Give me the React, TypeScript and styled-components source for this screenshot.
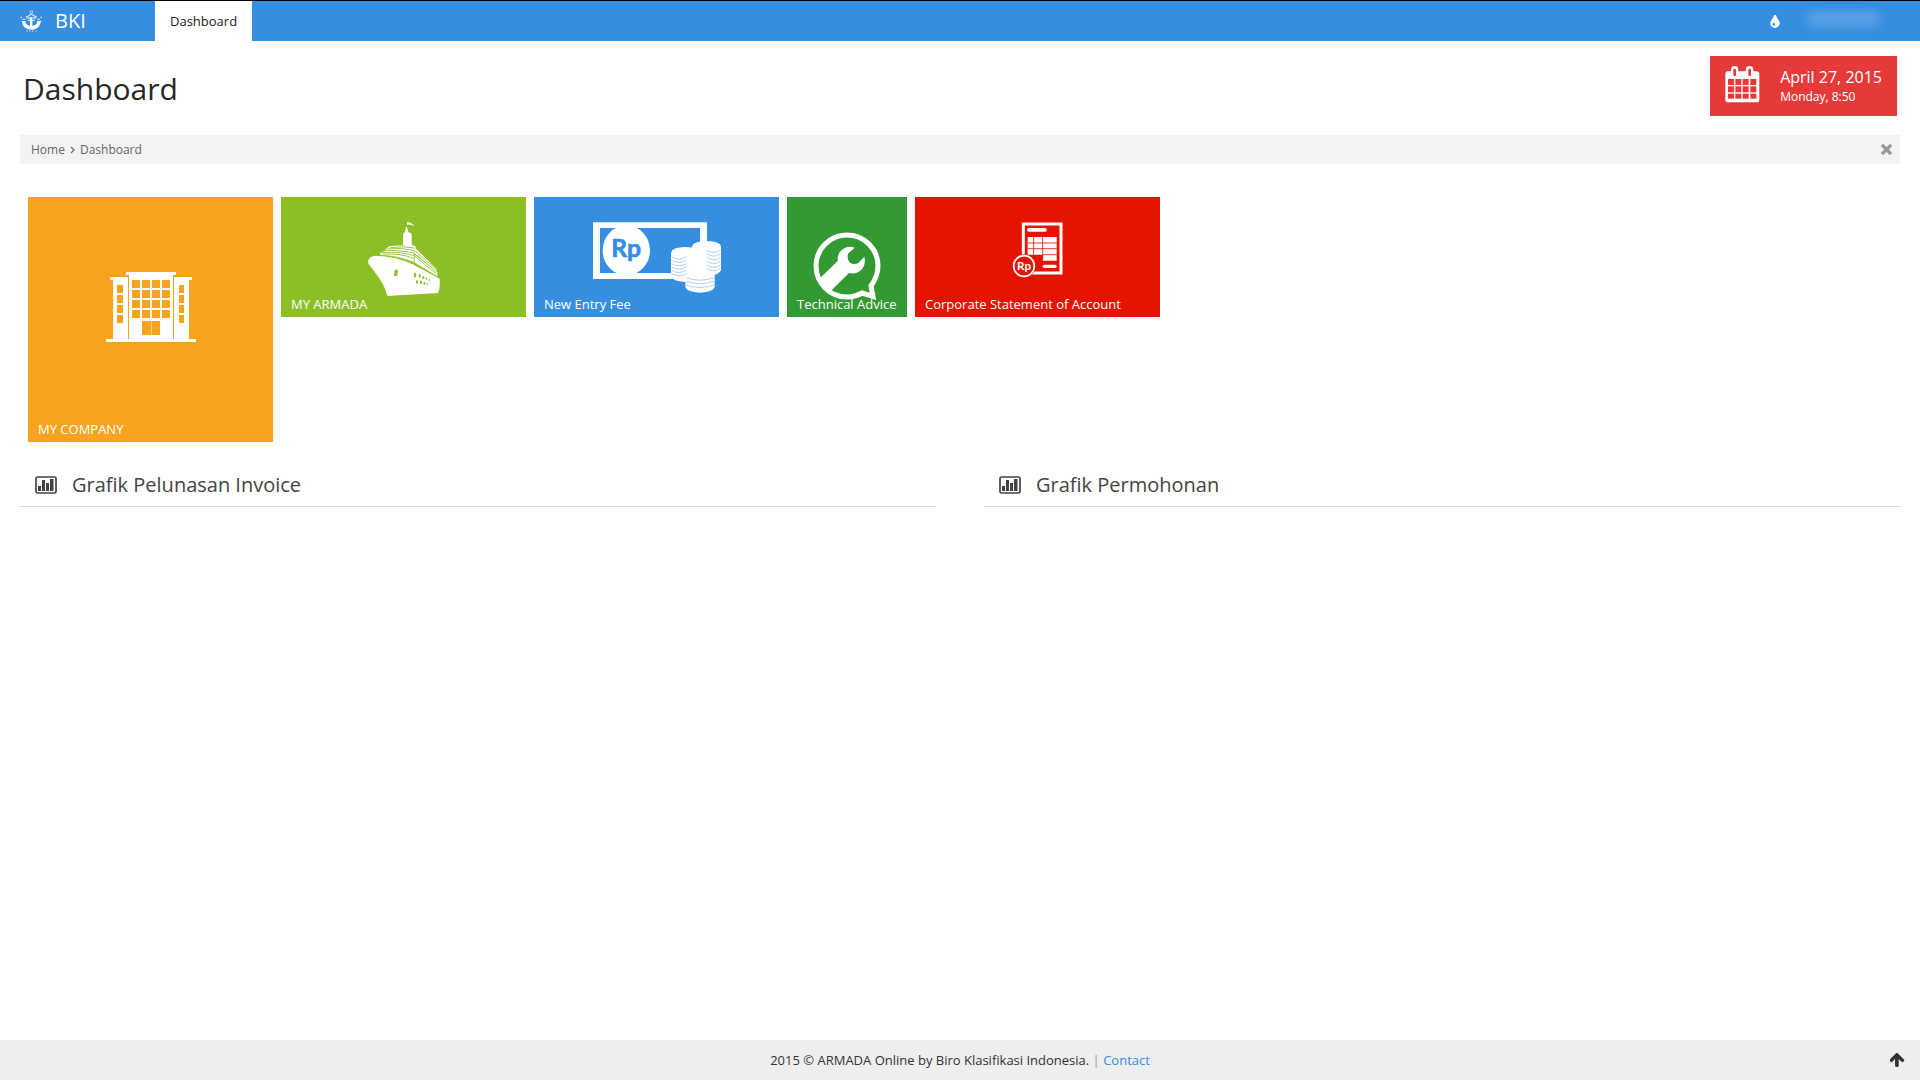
import React from "react";
import styled, { createGlobalStyle } from "styled-components";

const GlobalStyle = createGlobalStyle`
  *, *::before, *::after { box-sizing: border-box; }
  body {
    margin: 0;
    background: #fff;
    color: #333;
    font-family: "Open Sans", "Noto Sans", sans-serif;
    font-size: 13px;
    line-height: 20px;
  }
  a { text-decoration: none; color: inherit; }
  button { font: inherit; border: 0; padding: 0; background: none; cursor: pointer; }
  svg { display: block; flex: none; }
`;

const Page = styled.div`
  min-height: 100vh;
  display: flex;
  flex-direction: column;
`;

const Navbar = styled.header`
  display: flex;
  height: 41px;
  border-top: 1px solid #000;
  background: #368ee0;
  color: #fff;
`;

const Brand = styled.a`
  display: flex;
  align-items: center;
  gap: 13px;
  width: 155px;
  padding-left: 20px;
  font-size: 20px;
`;

const NavLink = styled.a`
  display: flex;
  align-items: center;
  padding: 0 15px;
  background: #fff;
  color: #222;
`;

const UserArea = styled.div`
  display: flex;
  align-items: center;
  gap: 26px;
  margin-left: auto;
  padding-right: 40px;
`;

const IconButton = styled.button`
  display: flex;
  color: inherit;
`;

const UserBlur = styled.span`
  width: 74px;
  height: 16px;
  margin-bottom: 4px;
  border-radius: 8px;
  background: #59a1e6;
  filter: blur(5px);
`;

const Main = styled.main`
  flex: 1;
  padding: 0 20px;
`;

const PageHeader = styled.div`
  display: flex;
  justify-content: space-between;
  align-items: flex-start;
  padding: 15px 3px 19px;
`;

const Title = styled.h1`
  margin: 13px 0 0;
  font-size: 30px;
  line-height: 40px;
  font-weight: 400;
  color: #262626;
`;

const DateCard = styled.div`
  display: flex;
  gap: 20px;
  height: 60px;
  padding: 10px 15px;
  background: #e63a3a;
  color: #fff;
`;

const DateText = styled.div`
  display: flex;
  flex-direction: column;
`;

const DateMain = styled.span`
  font-size: 16px;
  line-height: 22px;
`;

const DateSub = styled.span`
  font-size: 12px;
  line-height: 18px;
`;

const Breadcrumbs = styled.nav`
  display: flex;
  align-items: center;
  gap: 5px;
  height: 29px;
  padding: 0 8px 0 11px;
  background: #f3f3f3;
  color: #666;
  font-size: 12px;
`;

const CloseButton = styled(IconButton)`
  margin-left: auto;
  color: #999;
`;

const Tiles = styled.div`
  display: flex;
  flex-wrap: wrap;
  align-items: flex-start;
  gap: 8px;
  padding: 33px 8px 0;
`;

const Tile = styled.a<{ $color: string; $size: "small" | "wide" | "large" }>`
  display: grid;
  width: ${({ $size }) => ($size === "small" ? 120 : 245)}px;
  height: ${({ $size }) => ($size === "large" ? 245 : 120)}px;
  background: ${({ $color }) => $color};
  color: #fff;
`;

const TileIcon = styled.span<{ $top: number }>`
  grid-area: 1 / 1;
  justify-self: center;
  padding-top: ${({ $top }) => $top}px;
`;

const TileLabel = styled.span`
  grid-area: 1 / 1;
  align-self: end;
  padding: 0 10px 3px;
  white-space: nowrap;
`;

const Charts = styled.div`
  display: grid;
  grid-template-columns: 1fr 1fr;
  gap: 48px;
  padding-top: 22px;
`;

const ChartTitle = styled.h2`
  display: flex;
  align-items: center;
  gap: 15px;
  height: 43px;
  margin: 0;
  padding-left: 15px;
  border-bottom: 1px solid #d9d9d9;
  color: #444;
  font-size: 20px;
  font-weight: 400;
`;

const Footer = styled.footer`
  display: grid;
  grid-template-columns: 1fr auto 1fr;
  align-items: center;
  height: 40px;
  padding: 0 15px;
  background: #eee;
`;

const FooterText = styled.div`
  grid-column: 2;
`;

const Divider = styled.span`
  color: #999;
`;

const ContactLink = styled.a`
  color: #368ee0;
`;

const TopButton = styled(IconButton)`
  justify-self: end;
  color: #333;
`;

const Logo = () => (
  <svg width="22" height="22" viewBox="0 0 66 66" fill="none" stroke="#fff">
    <circle cx="34" cy="6" r="4" strokeWidth="3" opacity=".6" />
    <path d="M24 19L34 12L45 19M22 26L30 22M38 22L46 26" strokeWidth="4" opacity=".7" />
    <path d="M24 31H44M18 19L24 23M50 19L44 23" strokeWidth="4" opacity=".8" />
    <path d="M5 33L18 34L16 39Q22 47 30 47V22H37V47Q46 47 52 39L50 34L64 32L58 47Q50 59 34 59Q17 59 9 46Z" fill="#fff" stroke="none" />
    <path d="M1 22H6M7 28H17M51 28H60M61 22H66" strokeWidth="4" opacity=".7" />
    <path d="M18 63H50" strokeWidth="3" strokeDasharray="5 4" opacity=".6" />
  </svg>
);

const Drop = () => (
  <svg width="10" height="13" viewBox="384 128 1024 1408" fill="currentColor">
    <path d="M896 1152q0-36-20-69-1-1-15.5-22.5t-25.5-38-25-44-21-50.5q-4-16-21-16t-21 16q-7 23-21 50.5t-25 44-25.5 38-15.5 22.5q-20 33-20 69 0 53 37.500 90.500t90.500 37.500 90.500-37.500 37.500-90.500zm512-128q0 212-150 362t-362 150-362-150-150-362q0-145 81-275 6-9 62.500-90.500t101-151 99.500-178 83-201.500q9-30 34-47t51-17 51.500 17 33.500 47q28 93 83 201.500t99.500 178 101 151 62.500 90.500q81 127 81 275z" />
  </svg>
);

const Calendar = () => (
  <svg width="35" height="37" viewBox="0 0 105 111">
    <path d="M9 16H18V13Q18 0 29 0Q40 0 40 13V16H62V13Q62 0 74 0Q85 0 85 13V16H94Q103 16 103 25V101Q103 109 94 109H9Q1 109 1 101V25Q1 16 9 16Z" fill="#fff" />
    <g fill="#e63a3a">
      <rect x="25" y="8" width="8" height="22" rx="3" />
      <rect x="70" y="8" width="8" height="22" rx="3" />
      {[39, 61, 83].map((y) =>
        [[9, 18], [31, 18], [53, 18], [76, 18]].map(([x, w]) => (
          <rect key={`${x}-${y}`} x={x} y={y} width={w} height={y === 83 ? 15 : 18} />
        ))
      )}
    </g>
  </svg>
);

const Close = () => (
  <svg width="11" height="11" viewBox="0 0 11 11" fill="none" stroke="currentColor">
    <path d="M2 2L9 9M9 2L2 9" strokeWidth="3.200" strokeLinecap="square" />
  </svg>
);

const Chevron = () => (
  <svg width="5" height="8" viewBox="0 0 5 8" fill="none" stroke="currentColor">
    <path d="M1 1L4 4L1 7" strokeWidth="1.200" />
  </svg>
);

const Building = () => (
  <svg width="90" height="70" viewBox="0 0 90 70">
    <g fill="#fff">
      <path d="M20 0H70V3H67V67H23V3H20ZM4 5H22V67H7V8H4ZM68 5H86V8H83V67H68Z" />
      <rect y="67" width="90" height="3" />
    </g>
    <g fill="#f8a31f">
      {[0, 1, 2, 3].map((row) => (
        <g key={row}>
          <rect x="11" y={13 + row * 10} width="6" height="8" />
          <rect x="73" y={13 + row * 10} width="5" height="8" />
          {[26, 36, 46, 56].map((x) => (
            <rect key={x} x={x} y={8 + row * 10} width="8" height="8" />
          ))}
        </g>
      ))}
      <rect x="36" y="49" width="18" height="14" />
    </g>
    <path d="M45.500 49V63" stroke="#fbcb80" />
  </svg>
);

const Ship = () => (
  <svg width="75" height="78" viewBox="78 30 225 234">
    <g fill="#fff">
      <path d="M84 153Q88 138 106 137Q170 139 218 163L299 206Q301 234 294 249L142 258Q135 228 115 201Q99 178 86 163Z" />
      <path d="M189 106V74Q190 69 195 67L197 55L200 50L203 56L205 67Q215 67 215 75V106Z" />
      <path d="M201 37Q212 34 224 49Q213 42 201 44Z" />
      <path d="M137 116L150 108L216 105L226 109L228 116L290 177L289 186L222 128Q180 118 137 121Z" />
      <path d="M121 136V127L139 122Q184 122 219 130L292 187V200L221 158Q170 138 121 136Z" />
    </g>
    <g fill="none" stroke="#8cbf26" strokeWidth="2.500">
      <path d="M139 117Q188 112 225 123L289 178M122 128Q184 124 222 137L292 194M120 136Q172 137 221 157L299 204M223 128V158M150 113Q190 108 225 114M128 132Q180 130 220 144M232 137L288 184" />
    </g>
    <g fill="#8cbf26">
      <path d="M164 180L174 179L172 197L162 198Z" />
      {[[225, 195, 4, 7], [239, 198, 3, 6], [250, 203, 3, 5], [259, 206, 2, 4], [268, 210, 2, 3], [231, 216, 3, 6], [243, 217, 3, 6], [253, 220, 3, 4], [262, 222, 2, 3]].map(([x, y, rx, ry]) => (
        <ellipse key={`${x}-${y}`} cx={x} cy={y} rx={rx} ry={ry} />
      ))}
    </g>
  </svg>
);

const coinLines = (x: number, ys: number[], w: number) =>
  ys.map((y) => `M${x} ${y}Q${x + w / 2} ${y + 15} ${x + w} ${y}`).join("");

const Money = () => (
  <svg width="129" height="71" viewBox="36 35 387 213">
    <path d="M39 36H381V206H39ZM60 53V188H360V53Z" fill="#fff" fillRule="evenodd" />
    <ellipse cx="139" cy="120" rx="71" ry="75" fill="#fff" />
    <text x="94" y="139" fill="#368ee0" stroke="#368ee0" strokeWidth="2" fontFamily="Lato, sans-serif" fontSize="74" fontWeight="700">Rp</text>
    <g fill="#fff">
      <path d="M273 127Q276 111 316 110Q356 111 358 127V198Q353 214 316 215Q276 213 273 198Z" />
      <path d="M336 108Q340 93 380 92Q420 93 423 108V179Q419 195 380 197Q338 195 336 179Z" />
      <path d="M316 180H404V230Q400 245 360 247Q320 245 316 230Z" />
    </g>
    <g fill="none" stroke="#368ee0" strokeWidth="2" opacity=".6">
      <path d={coinLines(274, [139, 149, 159, 169, 179, 189], 46)} />
      <path d={coinLines(380, [119, 130, 141, 152, 163, 174], 42)} />
      <path d={coinLines(318, [202, 213, 224], 84)} />
    </g>
  </svg>
);

const Wrench = () => (
  <svg width="68" height="68" viewBox="100 124 204 204">
    <path d="M247 307Q226 319 202 319A93 93 0 1 1 295 225Q295 257 274 285L280 317Z" fill="none" stroke="#fff" strokeWidth="15" />
    <path d="M119 264L174 211Q172 187 190 175Q206 164 225 171L205 189Q201 206 211 216Q223 224 236 217L254 198Q260 225 242 240Q227 252 208 247L154 300Q133 287 119 264Z" fill="#fff" />
  </svg>
);

const Statement = () => (
  <svg width="51" height="56" viewBox="97 65 153 168">
    <rect x="131" y="71" width="113" height="147" fill="none" stroke="#fff" strokeWidth="9" />
    <g fill="#fff">
      <rect x="142" y="83" width="59" height="11" rx="5" />
      <rect x="189" y="193" width="42" height="10" rx="5" />
      <path d="M144 110H231V181H189V163H144Z" />
    </g>
    <path d="M162 110V163M189 110V181M144 128H231M144 145H231M189 163H231" stroke="#e51400" strokeWidth="2.500" />
    <circle cx="133" cy="197" r="35" fill="#e51400" />
    <circle cx="133" cy="197" r="31" fill="#e51400" stroke="#fff" strokeWidth="5" />
    <text x="112" y="208" fill="#fff" fontFamily="Lato, sans-serif" fontSize="35" fontWeight="700">Rp</text>
  </svg>
);

const BarChart = () => (
  <svg width="22" height="18" viewBox="0 0 22 18">
    <rect x="1" y="1" width="20" height="16" rx="1.500" fill="none" stroke="currentColor" strokeWidth="1.700" />
    <path d="M3 10H6V15H3ZM7 4H10V15H7ZM11 7H14V15H11ZM15 3H18.500V15H15Z" fill="currentColor" />
  </svg>
);

const ArrowUp = () => (
  <svg width="15" height="14" viewBox="128 64 1536 1472" fill="currentColor">
    <path d="M1611 832q0 51-37 90l-75 75q-38 38-91 38-54 0-90-38l-294-293v704q0 52-37.500 84.500t-90.500 32.500h-128q-53 0-90.500-32.500t-37.500-84.500v-704l-294 293q-36 38-90 38t-90-38l-75-75q-38-38-38-90 0-53 38-91l651-651q35-37 90-37 54 0 91 37l651 651q37 39 37 91z" />
  </svg>
);

const tiles = [
  { label: "MY COMPANY", color: "#f8a31f", size: "large", top: 75, icon: <Building /> },
  { label: "MY ARMADA", color: "#8cbf26", size: "wide", top: 23, icon: <Ship /> },
  { label: "New Entry Fee", color: "#368ee0", size: "wide", top: 25, icon: <Money /> },
  { label: "Technical Advice", color: "#339933", size: "small", top: 35, icon: <Wrench /> },
  { label: "Corporate Statement of Account", color: "#e51400", size: "wide", top: 25, icon: <Statement /> },
] as const;

export default function App() {
  return (
    <Page>
      <GlobalStyle />
      <Navbar>
        <Brand href="#"><Logo />BKI</Brand>
        <NavLink href="#">Dashboard</NavLink>
        <UserArea>
          <IconButton type="button" aria-label="Theme colour"><Drop /></IconButton>
          <UserBlur />
        </UserArea>
      </Navbar>
      <Main>
        <PageHeader>
          <Title>Dashboard</Title>
          <DateCard>
            <Calendar />
            <DateText>
              <DateMain>April 27, 2015</DateMain>
              <DateSub>Monday, 8:50</DateSub>
            </DateText>
          </DateCard>
        </PageHeader>
        <Breadcrumbs aria-label="Breadcrumb">
          <a href="#">Home</a>
          <Chevron />
          <a href="#">Dashboard</a>
          <CloseButton type="button" aria-label="Close"><Close /></CloseButton>
        </Breadcrumbs>
        <Tiles>
          {tiles.map((tile) => (
            <Tile key={tile.label} href="#" $color={tile.color} $size={tile.size}>
              <TileIcon $top={tile.top}>{tile.icon}</TileIcon>
              <TileLabel>{tile.label}</TileLabel>
            </Tile>
          ))}
        </Tiles>
        <Charts>
          <ChartTitle><BarChart />Grafik Pelunasan Invoice</ChartTitle>
          <ChartTitle><BarChart />Grafik Permohonan</ChartTitle>
        </Charts>
      </Main>
      <Footer>
        <FooterText>
          2015 © ARMADA Online by Biro Klasifikasi Indonesia. <Divider>|</Divider>{" "}
          <ContactLink href="#">Contact</ContactLink>
        </FooterText>
        <TopButton type="button" aria-label="Back to top"><ArrowUp /></TopButton>
      </Footer>
    </Page>
  );
}
